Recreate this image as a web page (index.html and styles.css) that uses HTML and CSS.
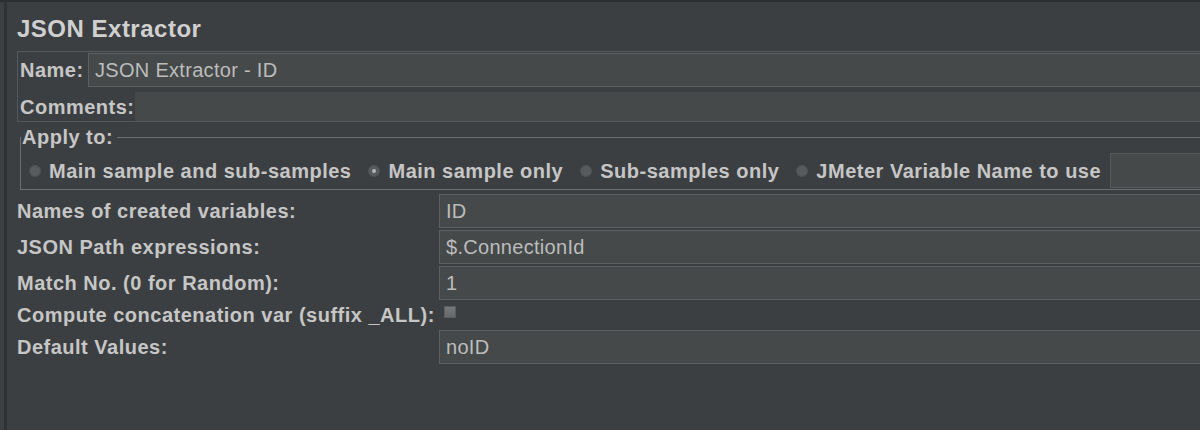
FILE: index.html
```html
<!DOCTYPE html>
<html>
<head>
<meta charset="utf-8">
<link rel="stylesheet" href="styles.css">
</head>
<body>
<div class="frame">
  <div class="title">JSON Extractor</div>
  <div class="namepanel">
    <div class="nrow">
      <span class="lbl name-lbl">Name:</span>
      <div class="field name-field">JSON Extractor - ID</div>
    </div>
    <div class="crow">
      <span class="lbl comments-lbl">Comments:</span>
      <div class="comments-field"></div>
    </div>
  </div>
  <fieldset class="apply">
    <legend>Apply to:</legend>
    <div class="radios">
      <div class="radio"><span class="dot"></span><span class="lbl">Main sample and sub-samples</span></div>
      <div class="radio"><span class="dot on"></span><span class="lbl">Main sample only</span></div>
      <div class="radio"><span class="dot"></span><span class="lbl">Sub-samples only</span></div>
      <div class="radio last"><span class="dot"></span><span class="lbl">JMeter Variable Name to use</span></div>
      <div class="field var-field"></div>
    </div>
  </fieldset>
  <div class="grid">
    <span class="lbl">Names of created variables:</span>
    <div class="field">ID</div>
    <span class="lbl">JSON Path expressions:</span>
    <div class="field">$.ConnectionId</div>
    <span class="lbl">Match No. (0 for Random):</span>
    <div class="field">1</div>
    <span class="lbl">Compute concatenation var (suffix _ALL):</span>
    <div class="cbcell"><span class="checkbox"></span></div>
    <span class="lbl">Default Values:</span>
    <div class="field">noID</div>
  </div>
</div>
</body>
</html>
```

FILE: styles.css
```css
html, body {
  margin: 0;
  padding: 0;
}
body {
  background: #3c3f41;
  overflow: hidden;
  height: 430px;
  border-top: 2px solid #2c2e30;
  box-sizing: border-box;
  font-family: "Liberation Sans", Arial, sans-serif;
}
.frame {
  margin-left: 4px;
  border-left: 3px solid #2f3234;
  padding-left: 10px;
  width: 1230px;
  height: 428px;
  box-sizing: border-box;
}
.title {
  padding-top: 13px;
  font-size: 24px;
  line-height: 28px;
  font-weight: bold;
  letter-spacing: 0.5px;
  color: #d0d0d0;
}
.lbl {
  font-size: 20px;
  line-height: 22px;
  font-weight: bold;
  letter-spacing: 0.5px;
  color: #c6c6c6;
  white-space: nowrap;
}
.field {
  box-sizing: border-box;
  height: 34px;
  background: #45494a;
  border: 1px solid #5d6062;
  padding-left: 6px;
  display: flex;
  align-items: center;
  font-size: 20px;
  letter-spacing: 0.3px;
  color: #bcbcbc;
  white-space: nowrap;
}
.namepanel {
  margin-top: 8px;
  border: 1px solid #56595b;
  border-right: none;
  padding: 1px 0 0 2px;
}
.nrow {
  display: flex;
  align-items: center;
  height: 34px;
}
.name-lbl {
  width: 68px;
  flex: none;
}
.name-field {
  flex: 1;
}
.crow {
  display: flex;
  align-items: center;
  height: 29px;
  margin-top: 5px;
}
.comments-lbl {
  width: 115px;
  flex: none;
}
.comments-field {
  flex: 1;
  height: 29px;
  background: #45494a;
}
.apply {
  margin: 5px 0 0 3px;
  padding: 5px 0 1px 8px;
  border: 1px solid #6c6f71;
  border-right: none;
  min-width: 0;
}
.apply legend {
  margin-left: -8px;
  padding: 0 4px 0 1px;
  font-size: 20px;
  line-height: 21px;
  font-weight: bold;
  letter-spacing: 0.5px;
  color: #c6c6c6;
}
.radios {
  display: flex;
  align-items: center;
  height: 35px;
}
.radio {
  display: flex;
  align-items: center;
  gap: 8px;
  margin-right: 17px;
  flex: none;
}
.radio.last {
  margin-right: 9px;
}
.dot {
  width: 12px;
  height: 12px;
  box-sizing: border-box;
  border-radius: 50%;
  background: #585b5e;
  border: 1px solid #505356;
  display: flex;
  align-items: center;
  justify-content: center;
}
.dot.on::after {
  content: "";
  width: 4px;
  height: 4px;
  border-radius: 50%;
  background: #b5b5b5;
}
.var-field {
  flex: 1;
  height: 35px;
  border-color: #565a5c;
}
.grid {
  margin-top: 4px;
  display: grid;
  grid-template-columns: 422px 1fr;
  grid-template-rows: 34px 34px 34px 26px 34px;
  row-gap: 2px;
}
.grid > .lbl {
  align-self: center;
}
.cbcell {
  display: flex;
  align-items: flex-start;
}
.checkbox {
  margin: 4px 0 0 5px;
  width: 12px;
  height: 12px;
  box-sizing: border-box;
  border: 1px solid #5a5d5f;
  background: linear-gradient(#76797b, #66696b);
}
```
